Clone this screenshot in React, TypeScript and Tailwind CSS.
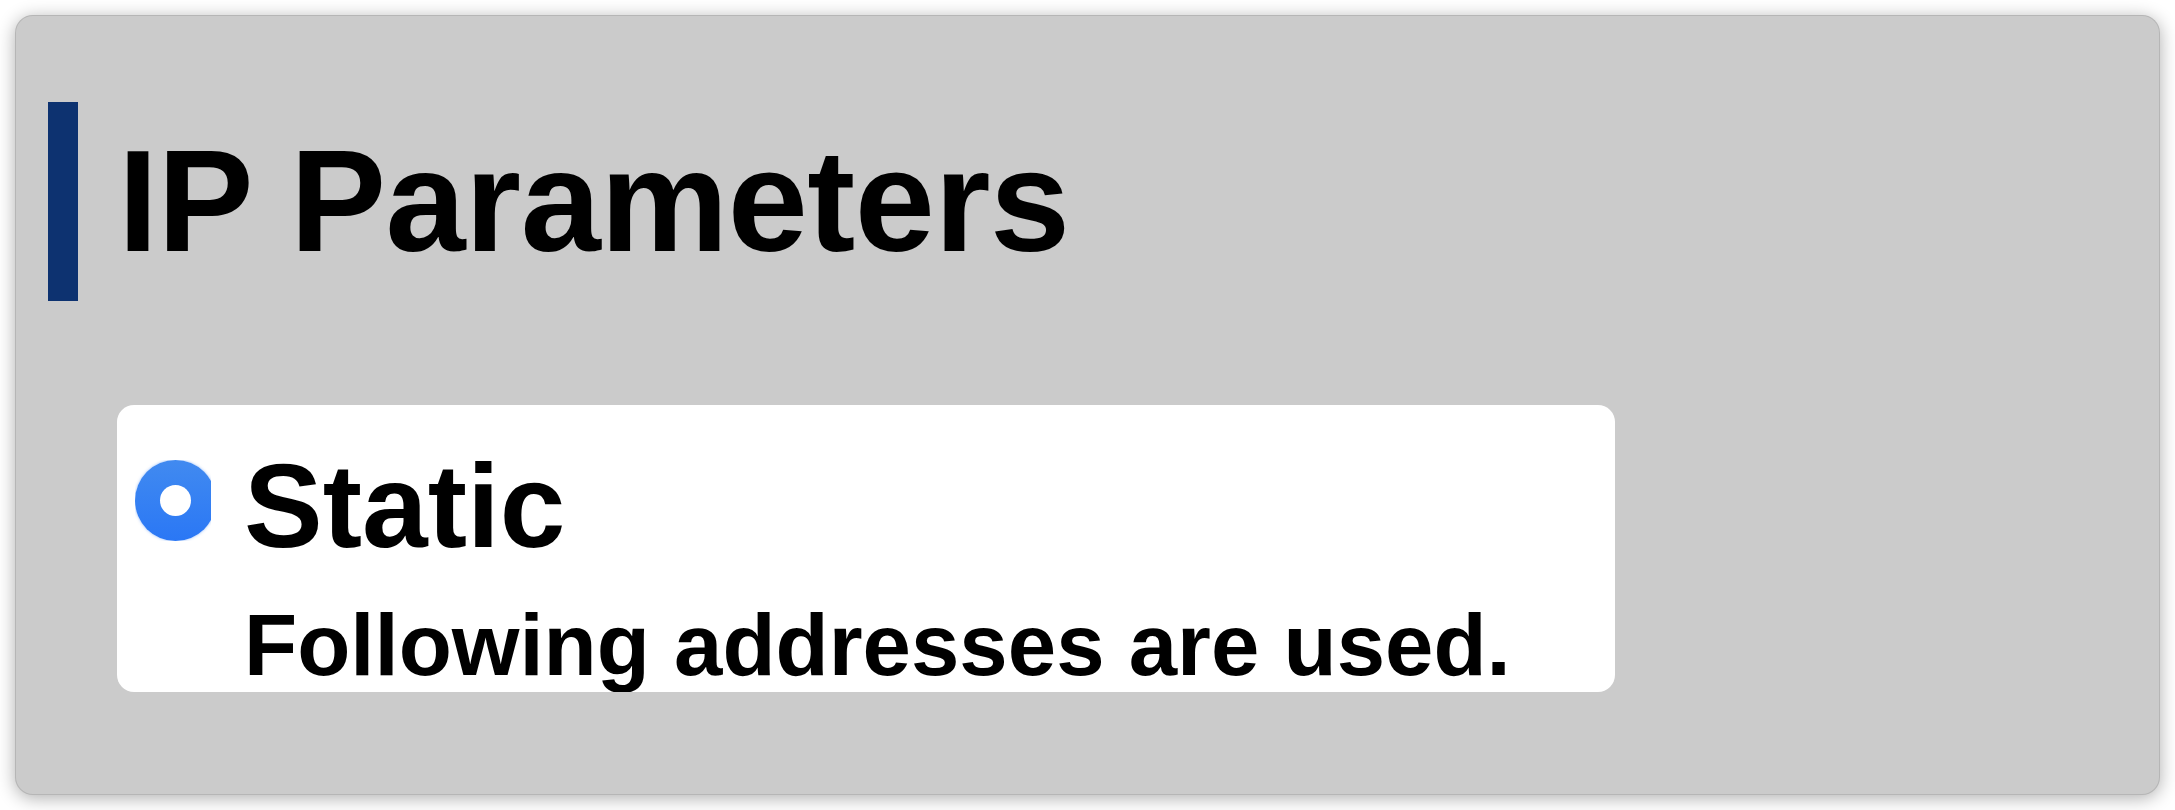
export default function App() {
  return (
    <div className="h-[810px] w-[2175px] bg-white p-[15px] font-['Liberation_Sans',Arial,sans-serif] text-black">
      <section className="h-[780px] w-[2145px] rounded-[18px] border border-black/10 bg-[#cbcbcb] pt-[86px] pl-[32px] shadow-[0_3px_18px_rgba(0,0,0,0.32)]">
        {/* Section title */}
        <div className="flex items-center gap-[40px]">
          <div className="h-[199px] w-[30px] bg-[#0d3270]" />
          <h1 className="text-[144px] font-bold leading-none tracking-[-0.5px]">IP Parameters</h1>
        </div>

        {/* Option card */}
        <div className="mt-[104px] ml-[69px] flex h-[287px] w-[1498px] items-start overflow-hidden rounded-[17px] bg-white pt-[42px] pl-[18px]">
          <div className="mt-[13px] w-[76px] shrink-0 overflow-hidden">
            <div className="flex size-[81px] items-center justify-center rounded-full bg-gradient-to-b from-[#418af0] to-[#2a77f5] shadow-[0_0_3px_rgba(42,119,245,0.5)]">
              <div className="size-[31px] rounded-full bg-white" />
            </div>
          </div>
          <div className="ml-[33px] flex flex-col">
            <span className="text-[118px] font-bold leading-none">Static</span>
            <span className="mt-[36px] text-[87px] font-bold leading-none">Following addresses are used.</span>
          </div>
        </div>
      </section>
    </div>
  );
}
